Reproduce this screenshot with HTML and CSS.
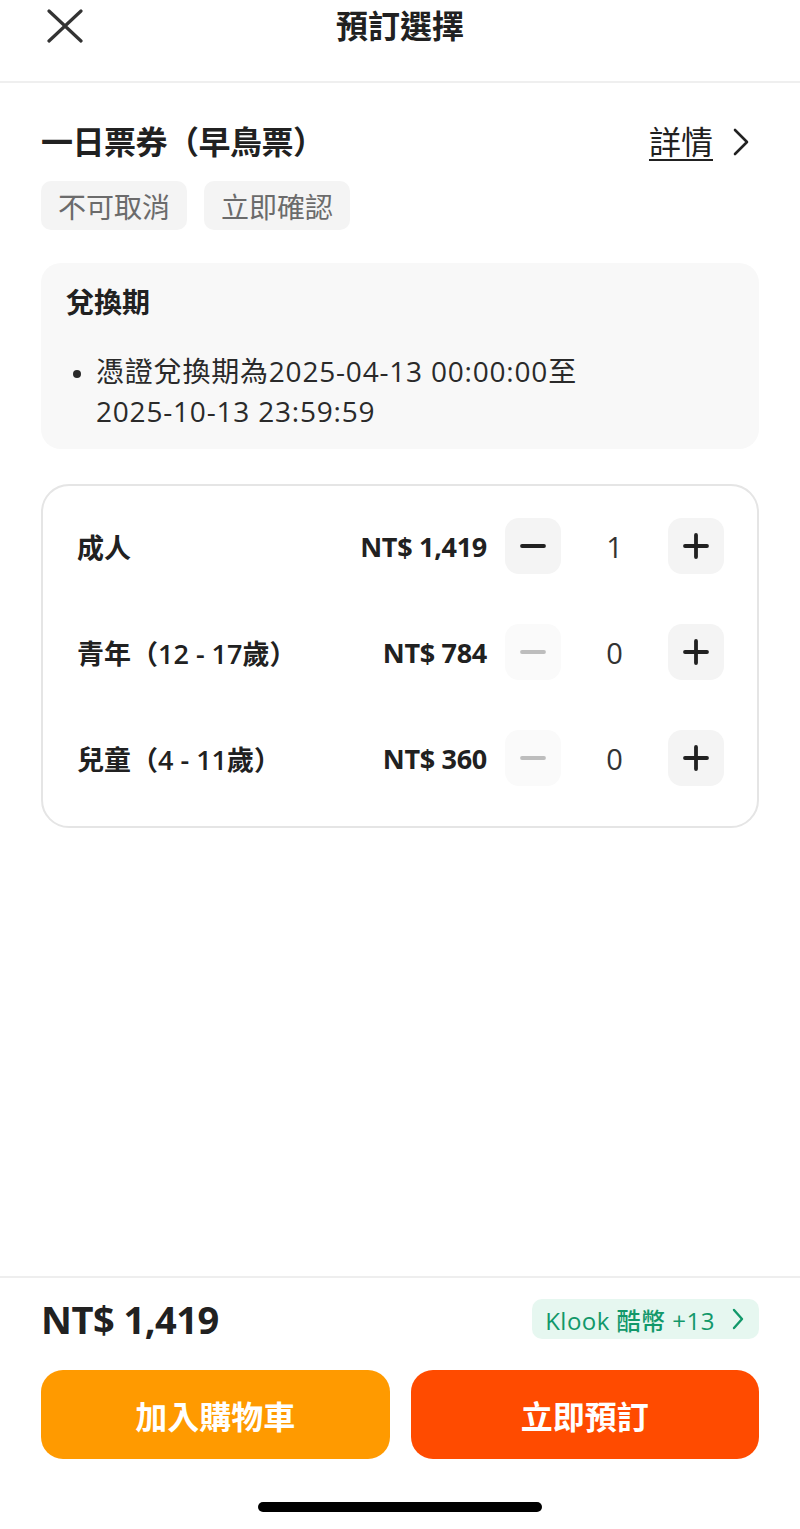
FILE: index.html
```html
<!DOCTYPE html>
<html lang="zh-Hant">
<head>
<meta charset="utf-8">
<title>預訂選擇</title>
<link rel="stylesheet" href="styles.css">
</head>
<body>
<div class="page">
  <header class="topbar">
    <svg class="close" width="36" height="34" viewBox="0 0 36 34"><path d="M2 2 L34 32 M34 2 L2 32" stroke="#333" stroke-width="3.2" stroke-linecap="round" fill="none"/></svg>
    <h1 class="topbar-title">預訂選擇</h1>
  </header>

  <main class="content">
    <div class="title-row">
      <h2 class="pkg-title">一日票券（早鳥票）</h2>
      <a class="details">詳情<svg class="chev" width="20" height="30" viewBox="0 0 20 30"><path d="M4 3 L16 15 L4 27" stroke="#222" stroke-width="2.6" fill="none" stroke-linecap="round" stroke-linejoin="round"/></svg></a>
    </div>
    <div class="tags">
      <span class="tag">不可取消</span>
      <span class="tag">立即確認</span>
    </div>

    <section class="info">
      <h3 class="info-title">兌換期</h3>
      <ul class="info-list">
        <li>憑證兌換期為2025-04-13 00:00:00至<br>2025-10-13 23:59:59</li>
      </ul>
    </section>

    <section class="tickets">
      <div class="row">
        <span class="label">成人</span>
        <span class="price">NT$ 1,419</span>
        <span class="btn"><svg width="26" height="26" viewBox="0 0 26 26"><path d="M2 13 H24" stroke="currentColor" stroke-width="3.8" stroke-linecap="round"/></svg></span>
        <span class="count">1</span>
        <span class="btn"><svg width="26" height="26" viewBox="0 0 26 26"><path d="M2 13 H24 M13 2 V24" stroke="currentColor" stroke-width="3.8" stroke-linecap="round"/></svg></span>
      </div>
      <div class="row">
        <span class="label">青年（12 - 17歲）</span>
        <span class="price">NT$ 784</span>
        <span class="btn disabled"><svg width="26" height="26" viewBox="0 0 26 26"><path d="M2 13 H24" stroke="currentColor" stroke-width="3.8" stroke-linecap="round"/></svg></span>
        <span class="count">0</span>
        <span class="btn"><svg width="26" height="26" viewBox="0 0 26 26"><path d="M2 13 H24 M13 2 V24" stroke="currentColor" stroke-width="3.8" stroke-linecap="round"/></svg></span>
      </div>
      <div class="row">
        <span class="label">兒童（4 - 11歲）</span>
        <span class="price">NT$ 360</span>
        <span class="btn disabled"><svg width="26" height="26" viewBox="0 0 26 26"><path d="M2 13 H24" stroke="currentColor" stroke-width="3.8" stroke-linecap="round"/></svg></span>
        <span class="count">0</span>
        <span class="btn"><svg width="26" height="26" viewBox="0 0 26 26"><path d="M2 13 H24 M13 2 V24" stroke="currentColor" stroke-width="3.8" stroke-linecap="round"/></svg></span>
      </div>
    </section>
  </main>

  <footer class="footer">
    <div class="total-row">
      <span class="total">NT$ 1,419</span>
      <span class="coins">Klook 酷幣 +13<svg class="coins-chev" width="14" height="24" viewBox="0 0 14 24"><path d="M3 3 L11 12 L3 21" stroke="#12986a" stroke-width="2.4" fill="none" stroke-linecap="round" stroke-linejoin="round"/></svg></span>
    </div>
    <div class="actions">
      <button class="action cart">加入購物車</button>
      <button class="action book">立即預訂</button>
    </div>
    <div class="home-bar"></div>
  </footer>
</div>
</body>
</html>
```

FILE: styles.css
```css
* { box-sizing: border-box; }
html, body { margin: 0; padding: 0; background: #fff; }
body {
  font-family: "Open Sans", "Noto Sans CJK TC", sans-serif;
  color: #212121;
}
.page {
  width: 800px;
  height: 1529px;
  display: flex;
  flex-direction: column;
}
.topbar {
  position: relative;
  height: 83px;
  border-bottom: 2px solid #efefef;
  display: flex;
  justify-content: center;
  align-items: flex-start;
  padding-top: 4px;
}
.close {
  position: absolute;
  left: 47px;
  top: 9px;
}
.topbar-title {
  margin: 0;
  font-size: 32px;
  line-height: 44px;
  font-weight: 700;
  color: #212121;
}
.content {
  flex: 1;
  padding: 0 41px;
}
.title-row {
  margin-top: 39px;
  display: flex;
  justify-content: space-between;
  align-items: center;
  height: 40px;
}
.pkg-title {
  margin: 0;
  font-size: 32px;
  line-height: 40px;
  font-weight: 700;
  letter-spacing: -0.5px;
}
.details {
  display: flex;
  align-items: center;
  font-size: 32px;
  line-height: 40px;
  color: #212121;
  text-decoration: underline;
  text-underline-offset: 5px;
  text-decoration-thickness: 2px;
  gap: 18px;
  margin-right: 8px;
}
.tags {
  display: flex;
  gap: 17px;
  margin-top: 19px;
}
.tag {
  height: 49px;
  padding: 0 17px;
  display: flex;
  align-items: center;
  background: #f4f4f4;
  border-radius: 10px;
  font-size: 28px;
  color: #6b6b6b;
}
.info {
  margin-top: 33px;
  background: #f8f8f8;
  border-radius: 20px;
  padding: 21px 25px 18px;
}
.info-title {
  margin: 0;
  font-size: 28px;
  line-height: 36px;
  font-weight: 700;
}
.info-list {
  margin: 31px 0 0;
  padding-left: 30px;
  font-size: 28px;
  line-height: 40px;
  color: #2a2a2a;
  letter-spacing: 0.8px;
}
.info-list li::marker { font-size: 22px; }
.tickets {
  margin-top: 35px;
  border: 2px solid #e5e5e5;
  border-radius: 28px;
  padding: 32px 33px 40px 34px;
  display: flex;
  flex-direction: column;
  gap: 50px;
}
.row {
  display: flex;
  align-items: center;
  height: 56px;
}
.label {
  flex: 1;
  font-size: 27px;
  font-weight: 600;
}
.price {
  font-size: 27px;
  font-weight: 700;
  margin-right: 18px;
  letter-spacing: -0.3px;
}
.btn {
  width: 56px;
  height: 56px;
  border-radius: 14px;
  background: #f4f4f4;
  display: flex;
  align-items: center;
  justify-content: center;
  color: #212121;
}
.btn.disabled {
  background: #fafafa;
  color: #bdbdbd;
}
.count {
  width: 107px;
  text-align: center;
  font-size: 29px;
  color: #333;
}
.footer {
  border-top: 2px solid #eeeeee;
  padding: 21px 41px 17px;
}
.total-row {
  display: flex;
  justify-content: space-between;
  align-items: center;
  height: 40px;
}
.total {
  font-size: 38px;
  font-weight: 700;
  letter-spacing: -0.5px;
}
.coins {
  height: 40px;
  display: flex;
  align-items: center;
  gap: 16px;
  padding: 0 14px 0 13px;
  background: #e6f7f0;
  border-radius: 10px;
  color: #12986a;
  font-size: 24px;
  font-weight: 500;
  letter-spacing: 0.5px;
}
.actions {
  display: flex;
  gap: 21px;
  margin-top: 31px;
}
.action {
  flex: 1;
  height: 89px;
  border: none;
  border-radius: 22px;
  color: #fff;
  font-family: "Open Sans", "Noto Sans CJK TC", sans-serif;
  font-size: 32px;
  font-weight: 700;
}
.cart { background: #ff9a00; }
.book { background: #ff4b00; }
.home-bar {
  width: 284px;
  height: 10px;
  background: #000;
  border-radius: 5px;
  margin: 43px auto 0;
}
```
